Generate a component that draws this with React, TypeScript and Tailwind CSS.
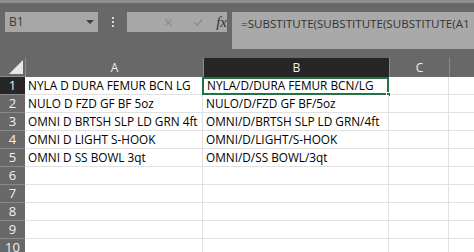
import React from "react";

const rowsA = [
  "NYLA D DURA FEMUR BCN LG",
  "NULO D FZD GF BF 5oz",
  "OMNI D BRTSH SLP LD GRN 4ft",
  "OMNI D LIGHT S-HOOK",
  "OMNI D SS BOWL 3qt",
];
const rowsB = [
  "NYLA/D/DURA FEMUR BCN/LG",
  "NULO/D/FZD GF BF/5oz",
  "OMNI/D/BRTSH SLP LD GRN/4ft",
  "OMNI/D/LIGHT/S-HOOK",
  "OMNI/D/SS BOWL/3qt",
];

const font = { fontFamily: '"Open Sans", "Noto Sans", sans-serif' };

export default function App() {
  const rows = Array.from({ length: 10 }, (_, i) => i);
  return (
    <div className="w-[474px] h-[252px] overflow-hidden bg-[#686868] text-black" style={font}>
      <div className="h-[3px] bg-[#8e8e8e]" />
      <div className="h-[55px] flex items-start pt-[9px] pl-[5px]">
        <div className="w-[93px] h-[20px] bg-[#a7a7a7] flex items-center justify-between pl-[4px] pr-[4px] text-[12px] text-[#3b3b3b]">
          <span>B1</span>
          <span className="w-0 h-0 border-l-[4px] border-r-[4px] border-t-[4px] border-l-transparent border-r-transparent border-t-[#404040]" />
        </div>
        <div className="w-[29px] h-[20px] flex flex-col items-center justify-center gap-[2px]">
          <span className="w-[2px] h-[2px] bg-[#d8d8d8]" />
          <span className="w-[2px] h-[2px] bg-[#d8d8d8]" />
          <span className="w-[2px] h-[2px] bg-[#d8d8d8]" />
        </div>
        <div className="w-[100px] h-[20px] bg-[#a7a7a7] flex items-center pl-[38px]">
          <svg width="9" height="9" viewBox="0 0 9 9">
            <path d="M0.5 0.5 L8.5 8.5 M8.5 0.5 L0.5 8.5" stroke="#8a8a8a" strokeWidth="1.5" />
          </svg>
          <svg width="11" height="9" viewBox="0 0 11 9" className="ml-[22px]">
            <path d="M0.5 4.5 L4 8 L10.5 0.5" stroke="#8a8a8a" strokeWidth="1.7" fill="none" />
          </svg>
          <span
            className="ml-[14px] text-[15px] italic text-[#333] leading-none"
            style={{ fontFamily: '"Liberation Serif", serif' }}
          >
            fx
          </span>
        </div>
        <div className="ml-[5px] flex-1 h-[37px] bg-[#a9a9a9] pl-[9px] pt-[3px] text-[11.6px] text-[#333] whitespace-nowrap overflow-hidden">
          =SUBSTITUTE(SUBSTITUTE(SUBSTITUTE(A1
        </div>
      </div>
      <div className="grid grid-cols-[25px_178px_186px_60px_1fr] grid-rows-[19px_repeat(10,18px)] text-[11.8px]">
        <div className="bg-[#686868] relative border-b border-[#8a8a8a]">
          <div
            className="absolute right-[2px] bottom-[2px]"
            style={{ borderBottom: "14px solid #e8e8e8", borderLeft: "14px solid transparent", width: 0, height: 0 }}
          />
        </div>
        <div className="bg-[#686868] text-[#f0f0f0] text-[12px] flex items-center justify-center border-l border-[#8a8a8a]">A</div>
        <div className="bg-[#262626] text-[#f0f0f0] text-[12px] flex items-center justify-center border-l border-[#8a8a8a]">B</div>
        <div className="bg-[#686868] text-[#f0f0f0] text-[12px] flex items-center justify-center border-l border-[#8a8a8a]">C</div>
        <div className="bg-[#686868] border-l border-[#8a8a8a]" />
        {rows.map((i) => (
          <React.Fragment key={i}>
            <div
              className={
                "flex items-center justify-center text-[#f2f2f2] text-[13px] border-b border-[#8a8a8a] " +
                (i === 0 ? "bg-[#262626]" : "bg-[#686868]")
              }
            >
              {i + 1}
            </div>
            <div className="bg-white border-b border-r border-[#e1e1e1] pl-[3px] flex items-center whitespace-nowrap overflow-hidden">
              {rowsA[i] ?? ""}
            </div>
            <div
              className={
                "bg-white pl-[3px] flex items-center whitespace-nowrap relative " +
                (i === 0 ? "border-2 border-[#217346] -ml-[1px]" : "border-b border-r border-[#e1e1e1] overflow-hidden")
              }
            >
              {rowsB[i] ?? ""}
              {i === 0 && <span className="absolute -right-[4px] -bottom-[4px] w-[5px] h-[5px] bg-[#217346] border border-white" />}
            </div>
            <div className="bg-white border-b border-r border-[#e1e1e1]" />
            <div className="bg-white border-b border-[#e1e1e1]" />
          </React.Fragment>
        ))}
      </div>
    </div>
  );
}
